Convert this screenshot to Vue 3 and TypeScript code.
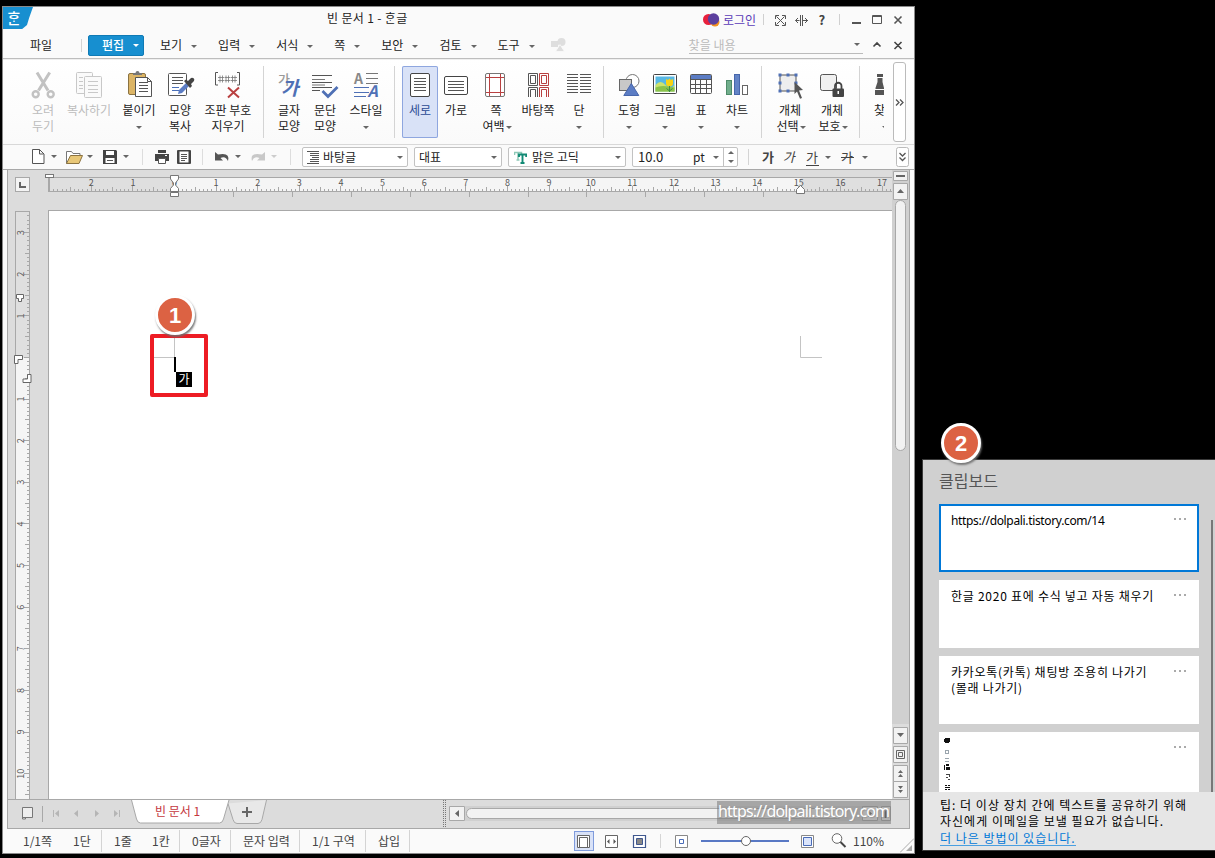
<script setup lang="ts">
interface Tool { lines: string[]; icon: string; w: number; drop?: 'below' | 'side'; off?: boolean; on?: boolean }
interface Group { left: number; right: number; tools: Tool[] }

const K = '#555'
const hlines = (x1: number, x2: number, ys: number[], c = K): string =>
  `<path d="${ys.map(y => `M${x1} ${y}H${x2}`).join('')}" stroke="${c}" fill="none"/>`

const icons: Record<string, string> = {
  cut: `<g fill="none" stroke="#c2c2c2"><path d="M10 2.500L21 20.500M22.700 2.500L11.500 20.500" stroke-width="3"/><circle cx="8.700" cy="24.300" r="3" stroke-width="2.400"/><circle cx="23.700" cy="24.300" r="3" stroke-width="2.400"/></g>`,
  copy: `<g fill="#fafafa" stroke="#c8c8c8"><rect x="3.500" y="2.500" width="16" height="21" rx="1"/><rect x="11.500" y="6.500" width="17" height="21" rx="1"/></g>` + hlines(6, 10, [7.5, 11.5, 15.5, 18.5], '#c8c8c8') + hlines(15, 25, [11.5, 15.5, 19.5, 22.5], '#c8c8c8'),
  paste: `<rect x="5.500" y="3.500" width="17" height="21" rx="1.500" fill="#dcb566" stroke="#8b7342"/><path d="M10 5V3h2.500a2 2 0 0 1 4 0H19v2z" fill="#777"/><path d="M12.500 7.500h12l4 4v15h-16z" fill="#fff" stroke="#555"/><path d="M24.500 7.500v4h4" fill="none" stroke="#555"/>` + hlines(16, 25, [12.5, 15.5, 18.5, 21.5]),
  shapecopy: `<rect x="4.500" y="3.500" width="18" height="22" rx="1" fill="#fff" stroke="#555"/>` + hlines(8, 19, [7.5, 10.5, 13.5]) + hlines(8, 15, [17.500, 20.500], '#4a6fb8') + `<path d="M14 24l1-4 7-7 3 3-7 7z" fill="#5b7cc4"/><path d="M20 11l2-1.500 2 1.500 3-3a2.200 2.200 0 0 1 3 3l-3 3 1 2-2 2z" fill="#444"/>`,
  clear: `<path d="M6 2.500H3.500V15H6M25 2.500h2.500V15H25" fill="none" stroke="#555"/><path d="M8 5.500v7M10.500 5.500v7M14 5.500v7M16.500 5.500v7M20.500 5.500v7M23 5.500v7M6 7.500h6M12.500 7.500h6M19 7.500h6M6 10.500h6M12.500 10.500h6M19 10.500h6" stroke="#777" stroke-width=".8"/><path d="M16 17.500l11 10M27 17.500l-11 10" stroke="#b94040" stroke-width="2"/>`,
  char: `<text x="5" y="13.500" font-size="13" font-weight="500" fill="#999">가</text><text x="8" y="24.500" font-size="19" font-weight="700" font-style="italic" fill="#4f70b5">가</text>`,
  para: hlines(3, 23, [5.5, 12.5, 17.5]) + hlines(3, 16, [9.5, 15], '#777') + hlines(3, 11, [20.5]) + `<path d="M13.500 21l5.500 5.500L28.500 17" fill="none" stroke="#4f70b5" stroke-width="2.800"/>`,
  style: `<text x="4" y="14" font-size="14" font-weight="700" fill="#888">A</text><text x="17.500" y="27" font-size="16" font-weight="700" font-style="italic" fill="#4f70b5">A</text>` + hlines(16, 28, [3.5, 8.5, 13.5], '#777') + hlines(4, 19, [17.5, 22.5], '#4f70b5') + hlines(4, 16, [26.5], '#4f70b5'),
  portrait: `<rect x="6.500" y="3.500" width="19" height="23" rx="1.500" fill="#fff" stroke="#444"/>` + hlines(10, 22, [8.5, 11.5, 14.5, 17.5, 20.5]),
  landscape: `<rect x="4.500" y="6.500" width="23" height="18" rx="1.500" fill="#fff" stroke="#444"/>` + hlines(8, 24, [11.5, 14.5, 17.5, 20.5]),
  margin: `<rect x="5.500" y="3.500" width="19" height="23" rx="1.500" fill="#fff" stroke="#777"/><path d="M9.500 4v22M20.500 4v22M6 7.500h18M6 22.500h18" stroke="#b94040"/>`,
  master: `<g fill="none" stroke="#555"><path d="M6.500 3.500h9v12h-9zM8.500 5.500h5v8h-5zM6.500 27V17.500h9V27M8.500 27v-7.500h5V27"/><path stroke="#b94040" d="M17.500 3.500h9v12h-9zM19.500 5.500h5v8h-5zM17.500 27V17.500h9V27M19.500 27v-7.500h5V27"/></g>`,
  columns: hlines(4, 15, [4.5, 7.5, 10.5, 13.5, 16.5, 19.5, 22.5]) + hlines(17, 28, [4.5, 7.5, 10.5, 13.5, 16.5, 19.5, 22.5]),
  shapes: `<circle cx="19.500" cy="11" r="6.500" fill="#fff" stroke="#777"/><rect x="6.500" y="9.500" width="12" height="11" fill="#c8c8c8" stroke="#666"/><path d="M18.300 13.500l7.500 12h-15z" fill="#5b7cc4" stroke="#4766ab"/>`,
  picture: `<rect x="4.500" y="4.500" width="23" height="19" rx="1" fill="#fff" stroke="#444"/><path d="M6.500 6.500h19v15h-19z" fill="#58b8e4"/><path d="M6.500 15q5-6 10 0t9 0v6.500h-19z" fill="#cce36c"/><path d="M6.500 17.500q6-3 19 0v4h-19z" fill="#8bc34a"/><path d="M17 9l2 1 1.500-1.500L22 10l2-1v4.500a3.500 3 0 0 1-7 0z" fill="#f8d313"/><path d="M20.500 16v6M17.500 18.500l3 2.500 3-2.500" stroke="#3d9140" fill="none"/>`,
  table: `<rect x="5.500" y="4.500" width="21" height="19" rx="1" fill="#fff" stroke="#555"/><path d="M6 5h20v4H6z" fill="#5b7cc4"/><path d="M5.500 9.500h21M5.500 14.500h21M5.500 18.500h21M10.500 9v14M15.500 9v14M21.500 9v14" stroke="#555"/>`,
  chart: `<rect x="5.500" y="10.500" width="5" height="14" fill="#70ad8b" stroke="#4e8b69"/><rect x="13.500" y="4.500" width="5" height="20" fill="#6384c6" stroke="#4766ab"/><rect x="21.500" y="15.500" width="5" height="9" fill="#fff" stroke="#666"/>`,
  select: `<rect x="6" y="5" width="16" height="16" fill="#eee" stroke="#555"/><path d="M4.500 3.500h3v3h-3zM12.500 3.500h3v3h-3zM20.500 3.500h3v3h-3zM4.500 11.500h3v3h-3zM20.500 11.500h3v3h-3zM4.500 19.500h3v3h-3zM12.500 19.500h3v3h-3z" fill="#4f70b5"/><path d="M20.500 12l8.500 8-4 .5 3 7.500-2 .8-3-7.300-2.500 2.500z" fill="#555"/>`,
  protect: `<rect x="4.500" y="4.500" width="16" height="16" rx="2" fill="#f0f0f0" stroke="#555"/><path d="M19 19v-3a3.200 3.200 0 0 1 6.500 0v3" fill="none" stroke="#444" stroke-width="1.800"/><rect x="16.500" y="18.500" width="11.500" height="8.500" rx="1" fill="#444"/><path d="M21.500 21h1.500v3h-1.500z" fill="#fff"/>`,
  find: `<path d="M8 4h6v3H8zM8.500 8h5v4l1.500 6v1H6.500v-1l2-6zM6 20h9v5H6zM18 4h6v3h-6zM18.500 8h5v4l2 6v1H17v-1l1.500-6zM17 20h9v5h-9z" fill="#555"/>`,
}

const groups: Group[] = [
  { left: 22, right: 6, tools: [
    { lines: ['오려', '두기'], icon: 'cut', w: 36, off: true },
    { lines: ['복사하기'], icon: 'copy', w: 56, off: true },
    { lines: ['붙이기'], icon: 'paste', w: 44, drop: 'below' },
    { lines: ['모양', '복사'], icon: 'shapecopy', w: 38 },
    { lines: ['조판 부호', '지우기'], icon: 'clear', w: 58 },
  ] },
  { left: 7, right: 5, tools: [
    { lines: ['글자', '모양'], icon: 'char', w: 36 },
    { lines: ['문단', '모양'], icon: 'para', w: 36 },
    { lines: ['스타일'], icon: 'style', w: 46, drop: 'below' },
  ] },
  { left: 7, right: 3, tools: [
    { lines: ['세로'], icon: 'portrait', w: 36, on: true },
    { lines: ['가로'], icon: 'landscape', w: 36 },
    { lines: ['쪽', '여백'], icon: 'margin', w: 44, drop: 'side' },
    { lines: ['바탕쪽'], icon: 'master', w: 40 },
    { lines: ['단'], icon: 'columns', w: 42, drop: 'below' },
  ] },
  { left: 7, right: 6, tools: [
    { lines: ['도형'], icon: 'shapes', w: 36, drop: 'below' },
    { lines: ['그림'], icon: 'picture', w: 36, drop: 'below' },
    { lines: ['표'], icon: 'table', w: 36, drop: 'below' },
    { lines: ['차트'], icon: 'chart', w: 36, drop: 'below' },
  ] },
  { left: 7, right: 6, tools: [
    { lines: ['개체', '선택'], icon: 'select', w: 42, drop: 'side' },
    { lines: ['개체', '보호'], icon: 'protect', w: 42, drop: 'side' },
  ] },
  { left: 4, right: 0, tools: [{ lines: ['찾기'], icon: 'find', w: 42, drop: 'below' }] },
]

const menus = ['보기', '입력', '서식', '쪽', '보안', '검토', '도구']

const CM = 41.62
interface Tick { p: number; len: number }
const ticks = (zero: number, from: number, to: number): Tick[] => {
  const out: Tick[] = []
  for (let i = Math.ceil((from - zero) / CM * 10); zero + i * CM / 10 < to; i++) {
    out.push({ p: Math.round(zero + i * CM / 10) + 0.5, len: i % 10 === 0 ? 5 : i % 5 === 0 ? 4 : 2 })
  }
  return out
}
const hPath = ticks(125, 4, 843).map(t => `M${t.p} ${14 - t.len}V14`).join('')
const vPath = ticks(146, 3, 587).map(t => `M${14 - t.len} ${t.p}H14`).join('')
const hNums = Array.from({ length: 20 }, (_, i) => i - 2).map(n => ({ n: Math.abs(n), x: 125.5 + n * CM }))
const vNums = Array.from({ length: 14 }, (_, i) => i - 3).filter(n => n !== 0).map(n => ({ n: Math.abs(n), y: 146.5 + n * CM }))
const tabStops = Array.from({ length: 10 }, (_, i) => Math.round(184 + i * 58.9) + 0.5)

const clips: string[][] = [
  ['https://dolpali.tistory.com/14'],
  ['한글 2020 표에 수식 넣고 자동 채우기'],
  ['카카오톡(카톡) 채팅방 조용히 나가기', '(몰래 나가기)'],
]
</script>

<template>
  <div class="desktop">
    <div class="window">
      <header class="title">
        <div class="logo">ᄒᆞᆫ</div>
        <div class="caption">빈 문서 1 - ᄒᆞᆫ글</div>
        <div class="tright">
          <svg width="17" height="14" viewBox="0 0 17 14"><circle cx="5.500" cy="6.500" r="5.500" fill="#e8203c" /><circle cx="12" cy="9" r="4.500" fill="#f5921e" /><circle cx="10.500" cy="6" r="5.700" fill="#5b3f9e" /></svg>
          <span class="login">로그인</span>
          <svg class="tools" width="150" height="16" viewBox="760 12 150 16" fill="none" stroke="#555">
            <path d="M763.500 14v11M839.500 14v11" stroke="#d0d0d0" />
            <path d="M775.500 19v-3.500h3.500M782 15.500h3.500V19M785.500 22v3.500H782M779 25.500h-3.500V22M776.500 16.500l8 8M784.500 16.500l-8 8" />
            <path d="M800.500 15v11M802.500 15v11M795.500 20.500h4M803 20.500h5M798 18l-2.500 2.500L798 23M805 18l2.500 2.500L805 23" />
            <path d="M852 23h9" stroke-width="2" />
            <path d="M872.500 15.500h9v8h-9zM872 16.500h10" />
            <path d="M894.500 16.500l7 7M901.500 16.500l-7 7" stroke-width="1.600" />
            <text x="818.500" y="25" stroke="none" fill="#444" font-size="13" font-weight="700">?</text>
          </svg>
        </div>
      </header>

      <nav class="menu">
        <span class="file">파일</span>
        <i class="vline" />
        <span class="edit">편집<b class="arr white" /></span>
        <span v-for="m in menus" :key="m" class="mi">{{ m }}<b class="arr" /></span>
        <svg class="mshape" width="16" height="14" viewBox="0 0 16 14" fill="#dedede"><rect y="3" width="7" height="6" /><circle cx="10.500" cy="4" r="4" /><path d="M9 6.500l4.500 7H4.500z" stroke="#fafafa" stroke-width=".8" /></svg>
        <div class="search"><span>찾을 내용</span><b class="arr" /></div>
        <svg width="32" height="12" viewBox="0 0 32 12" fill="none" stroke="#444" stroke-width="1.600"><path d="M1.500 7.500L5 4l3.500 3.500M22.500 3l7 7M29.500 3l-7 7" /></svg>
      </nav>

      <section class="ribbon">
        <div class="groups">
          <div v-for="(g, gi) in groups" :key="gi" class="group" :style="{ paddingLeft: g.left + 'px', paddingRight: g.right + 'px' }">
            <div v-for="t in g.tools" :key="t.icon" class="tool" :class="{ off: t.off, on: t.on }" :style="{ width: t.w + 'px' }">
              <svg width="32" height="30" viewBox="0 0 32 30" v-html="icons[t.icon]" />
              <div v-for="(l, li) in t.lines" :key="l" class="tl">{{ l }}<b v-if="t.drop === 'side' && li === 1" class="arr" /></div>
              <b v-if="t.drop === 'below'" class="arr under" />
            </div>
          </div>
        </div>
        <div class="more"><svg width="9" height="7" viewBox="0 0 9 7" fill="none" stroke="#555" stroke-width="1.300"><path d="M1 .5l3 3-3 3M5 .5l3 3-3 3" /></svg></div>
      </section>

      <section class="format">
        <svg class="quick" width="290" height="20" viewBox="3 147 290 20" fill="none" stroke="#555">
          <path d="M32.500 149.500h7l4.500 4.500v9.500h-11.500zM39.500 149.500v4.500h4" fill="#fff" />
          <path d="M66.500 163.500v-12h5l1.500 2h7v4" fill="#fff" stroke="#777" /><path d="M66.500 163.500l4-8h12l-3.500 8z" fill="#e8c777" stroke="#8b7342" />
          <path d="M103 150h13l1 1v13h-14z" fill="#444" stroke="none" /><path d="M106 151h8v4h-8zM105.500 158h9v5h-9z" fill="#fff" stroke="none" /><path d="M107 160.500h6" />
          <path d="M158 150h8v3h-8zM155 154h14v7h-14z" fill="#444" stroke="none" /><path d="M158.500 158.500h7v5h-7z" fill="#fff" /><path d="M165 155.500h2" stroke="#fff" />
          <rect x="177" y="150" width="14" height="14" rx="1" fill="#444" stroke="none" /><rect x="179.500" y="151.500" width="9" height="11" fill="#fff" stroke="none" /><path d="M181 154.500h6M181 156.500h6M181 158.500h6M181 160.500h4" />
          <path d="M215 152v8.500h8l-2.500-2.500q5-2.500 7.500 3 2.500-9-10-6.500z" fill="#555" stroke="none" />
          <path d="M265 152v8.500h-8l2.500-2.500q-5-2.500-7.500 3-2.500-9 10-6.500z" fill="#c8c8c8" stroke="none" />
          <path d="M51 155h6l-3 3zM87 155h6l-3 3zM123 155h6l-3 3zM235 155h6l-3 3z" fill="#666" stroke="none" /><path d="M271 155h6l-3 3z" fill="#ccc" stroke="none" />
          <path d="M142.500 149v16M202.500 149v16M290.500 149v16" stroke="#ddd" />
        </svg>
        <div class="combo c1"><svg width="12" height="13" viewBox="0 0 12 13" stroke="#555"><path d="M0 .5h12M3 2.500h9M3 4.500h9M5 6.500h7M3 8.500h9M3 10.500h9M0 12.500h12" /></svg><span>바탕글</span><b class="arr" /></div>
        <div class="combo c2"><span>대표</span><b class="arr" /></div>
        <div class="combo c3"><svg width="13" height="13" viewBox="0 0 13 13" fill="none"><path d="M.5 4V1.500h7V4M4 1.500v7M2.500 9h3" stroke="#8fc9b8" stroke-width="1.500" /><path d="M5 6V3.500h7.200V6M8.500 3.500v8M6.500 12h4" stroke="#128a75" stroke-width="1.900" /></svg><span>맑은 고딕</span><b class="arr" /></div>
        <div class="combo c4"><span class="size">10.0</span><span>pt</span><b class="arr" /><div class="spin"><b class="arr up" /><b class="arr" /></div></div>
        <i class="vline fl" />
        <div class="fmt"><b>가</b></div>
        <div class="fmt it">가</div>
        <div class="fmt un">가</div><b class="arr fa" />
        <div class="fmt st">가</div><b class="arr" />
        <svg class="fmore" width="13" height="20" viewBox="0 0 13 20" fill="none" stroke="#555"><rect x=".5" y=".5" width="12" height="19" rx="2" fill="#fff" stroke="#bbb" /><path d="M3.500 6l3 3 3-3M3.500 10.500l3 3 3-3" stroke-width="1.300" /></svg>
      </section>

      <main class="work">
        <div class="leftcol">
          <svg class="corner" width="15" height="15" viewBox="0 0 15 15"><rect x=".5" y=".5" width="14" height="14" fill="#f4f4f4" stroke="#a8a8a8" /><path d="M5 5v5h6" fill="none" stroke="#666" stroke-width="2" /></svg>
          <svg class="vruler" width="18" height="588" viewBox="-1 0 18 588">
            <rect x=".5" y=".5" width="14" height="590" fill="#dfdfdf" stroke="#a8a8a8" /><rect x="1" y="147" width="13" height="441" fill="#f5f5f5" />
            <path :d="vPath" stroke="#a8a8a8" />
            <text v-for="(v, i) in vNums" :key="i" :transform="`translate(8.500 ${v.y}) rotate(-90)`" text-anchor="middle">{{ v.n }}</text>
            <g fill="#fff" stroke="#666"><path d="M1.500 83.500h7v4h-2v3h-3v-3h-2z" /><path d="M-.5 144.500h8v4h-4.500v4h-3.500z" /><path d="M12.500 163.500h3.500v8h-8v-3.500h4.500z" /></g>
          </svg>
        </div>
        <div class="canvas">
          <svg class="hruler" width="848" height="40" viewBox="-4 -7 848 40">
            <path d="M0 .500H844V14.500H0z" fill="#dfdfdf" /><path d="M125.500 1h626v13h-626z" fill="#f5f5f5" />
            <path d="M0 .500H844M0 14.500H844" stroke="#a8a8a8" /><path d="M0 0v15" stroke="#a8a8a8" stroke-width="2" />
            <path :d="hPath" stroke="#a8a8a8" />
            <path v-for="x in tabStops" :key="x" :d="`M${x} 15v5`" stroke="#a8a8a8" />
            <text v-for="(h, i) in hNums" :key="i" :x="h.x" y="9" text-anchor="middle">{{ h.n }}</text>
            <g fill="#fff" stroke="#777"><rect x="-3.500" y="-2.500" width="8" height="3" /><path d="M121.500-1.500h8V2L126.500 6v2l3 3.500v3h-8v-3l3-3.500V6l-3-4zM121.500 15.500h8v4h-8z" /><path d="M121.500 14.500h8" /><path d="M747.500 16.500v-4l4-4 4 4v4z" /></g>
          </svg>
          <div class="page">
            <svg width="843" height="588" viewBox="49 211 843 588">
              <path d="M174.500 338v19.500H154M800.500 336v21.500H822" fill="none" stroke="#c4c4c4" />
              <rect x="152" y="336" width="54" height="59" fill="none" stroke="#ed1c24" stroke-width="4" stroke-linejoin="round" />
              <path d="M175 357v15" stroke="#000" stroke-width="2" /><rect x="176" y="372" width="16" height="15" fill="#000" />
              <text x="184" y="384" text-anchor="middle">가</text>
            </svg>
          </div>
        </div>
        <div class="vscroll">
          <svg width="17" height="629" viewBox="892 170 17 629" fill="#f2f2f2" stroke="#a8a8a8">
            <path d="M892 170h17v629h-17z" fill="#d0d0d0" stroke="none" /><path d="M892 724h17v75h-17z" fill="#dcdcdc" stroke="none" />
            <path d="M893.500 171.500h14v9h-14zM893.500 183.500h14v16h-14zM893.500 727.500h14v16h-14zM893.500 746.500h14v16h-14zM893.500 765.500h14v16h-14zM893.500 781.500h14v16h-14z" />
            <rect x="895.500" y="200.500" width="10" height="250" rx="5" />
            <path d="M896 176h9" stroke="#666" stroke-width="2" />
            <path d="M897 193h7l-3.500-4zM897 733h7l-3.500 4zM898 773h5l-2.500-3zM898 777h5l-2.500-3zM898 786h5l-2.500 3zM898 790h5l-2.500 3z" fill="#666" stroke="none" />
            <path d="M896.500 750.500h8v8h-8zM898.500 752.500h4v4h-4z" stroke="#666" />
          </svg>
        </div>
      </main>

      <section class="tabs">
        <svg width="901" height="28" viewBox="8 800 901 28" fill="none" stroke="#a8a8a8">
          <path d="M22.500 807.500h10v10h-7v1.500h-3zM23 817.500h4" stroke="#777" fill="#eee" />
          <path d="M42.500 806v16" />
          <g fill="#b5b5b5" stroke="none"><path d="M53 810h1v7h-1zM59 810v7l-4-3.500zM78 810v7l-4-3.500zM95 810v7l4-3.500zM114 810v7l4-3.500zM119 810h1v7h-1z" /></g>
          <path d="M228 803.500l5 16q1 4 4 4h21q3 0 4-4l4.500-19.500" fill="#e8e8e8" />
          <path d="M131.500 800l5 19q1 4 4 4h79q3 0 4-4l5.500-19" fill="#fff" />
          <path d="M242 812h10M247 807v10" stroke="#666" stroke-width="2" />
          <path d="M443.500 800v28M445.500 800v28" stroke="#777" stroke-dasharray="1 1" />
          <path d="M465 806h398v15H465z" fill="#d0d0d0" stroke="none" />
          <path d="M449.500 806.500h15v14h-15zM862.500 806.500h15v14h-15zM881.500 806.500h9v14h-9z" fill="#f2f2f2" />
          <path d="M459 810v7l-4-3.500zM868 810v7l4-3.500z" fill="#666" stroke="none" />
          <path d="M885.500 809v9" stroke="#555" stroke-width="2" />
          <rect x="466.500" y="808.500" width="376" height="10" rx="5" fill="#f2f2f2" />
          <text x="155" y="816" class="doc" fill="#c4383e" stroke="none">빈 문서 1</text>
        </svg>
        <div class="mark">https://dolpali.tistory.com</div>
      </section>

      <footer class="status">
        <span class="s1">1/1쪽</span><span class="s2">1단</span><span class="s3">1줄</span><span class="s4">1칸</span><span class="s5">0글자</span><span class="s6">문자 입력</span><span class="s7">1/1 구역</span><span class="s8">삽입</span>
        <svg width="276" height="23" viewBox="571 830 276 23" fill="none" stroke="#666">
          <rect x="574.500" y="831.500" width="19" height="19" fill="#d9e2f7" stroke="#7f9bdc" />
          <path d="M577.500 835.500h12v12h-12zM579.500 847v-9.500h8V847" fill="#fff" />
          <path d="M605.500 835.500h12v12h-12z" fill="#fff" /><path d="M607 841.500l2.500-2.500v5zM616 841.500l-2.500-2.500v5z" fill="#555" stroke="none" />
          <path d="M633.500 835.500h12v12h-12z" fill="#fff" stroke="#40588f" stroke-width="1.200" /><path d="M636.500 838.500h6v6h-6z" fill="#888" stroke="#40588f" />
          <path d="M660.500 834v14" stroke="#d5d5d5" />
          <path d="M675.500 835.500h12v12h-12z" fill="#fff" stroke="#888" /><path d="M679.500 839.500h4v4h-4z" stroke="#4a6cb8" />
          <path d="M701 841h88" stroke="#5878c4" stroke-width="2" /><circle cx="746" cy="841" r="4.500" fill="#fff" />
          <path d="M801.500 835.500h12v12h-12z" fill="#fff" stroke="#888" /><path d="M803.500 837.500h8v8h-8z" fill="#dbe5fb" stroke="#4a6cb8" />
          <circle cx="837" cy="838.500" r="4.800" fill="#fff" /><path d="M840.500 842l5 5" stroke="#444" stroke-width="2" />
        </svg>
        <span class="zoom">110%</span>
        <svg class="grip" width="14" height="15" viewBox="0 0 14 15"><path d="M0 14.500L14 .5" stroke="#aaa" /><path d="M12 7v6H6z" fill="#aaa" /></svg>
      </footer>
    </div>

    <div class="badge one">1</div>

    <aside class="clipboard">
      <h2>클립보드</h2>
      <div class="list">
        <div v-for="(c, i) in clips" :key="i" class="card" :class="{ sel: i === 0 }">
          <div><p v-for="l in c" :key="l" :class="{ latin: i === 0 }">{{ l }}</p></div><span class="dots"><i /><i /><i /></span>
        </div>
        <div class="card pic">
          <svg width="8" height="56" viewBox="0 0 8 56" fill="#111"><path d="M1 2h5v1H1zM0 3h6v3H0zM1 6h4v1H1zM0 29h1v5H0zM2 28h3v2H2zM2 31h4v3H2zM1 49h2v1H1zM4 49h2v1H4zM1 51h5v1H1zM1 53h2v1H1zM4 53h2v1H4z" /><path d="M1 14h4v1H1zM1 17h4v1H1zM4 14h1v4H4zM1 22h4v1H1zM1 25h4v1H1zM1 14h1v4H1z" fill="#9aa5ad" /><path d="M2 38h3v1H2zM5 38h1v3H5zM2 41h2v1H2zM4 43h2v1H4z" fill="#444" /></svg>
          <span class="dots"><i /><i /><i /></span>
        </div>
      </div>
      <div class="bar" />
      <div class="tip"><p>팁: 더 이상 장치 간에 텍스트를 공유하기 위해</p><p>자신에게 이메일을 보낼 필요가 없습니다.</p><a>더 나은 방법이 있습니다.</a></div>
    </aside>
    <div class="badge two">2</div>
  </div>
</template>

<style>
html, body { margin: 0; background: #000; overflow: hidden; }
</style>

<style scoped>
.desktop { position: relative; width: 1215px; height: 858px; background: #000; overflow: hidden; font: 12px/16px "Noto Sans CJK KR", "Noto Sans", sans-serif; color: #222; }
.desktop * { box-sizing: border-box; }
svg { display: block; flex: none; }
span, div { white-space: nowrap; }
.window { position: absolute; left: 2px; top: 6px; width: 913px; height: 848px; border: 1px solid #8a8a8a; background: #fafafa; display: flex; flex-direction: column; }
.arr { display: inline-block; flex: none; width: 0; height: 0; border: 3px solid transparent; border-top-color: #666; border-bottom: 0; }
.arr.white { border-top-color: #fff; }
.arr.up { border-top: 0; border-bottom: 3px solid #666; }
.vline { width: 1px; background: #d4d4d4; flex: none; }

.title { height: 26px; flex: none; display: flex; }
.logo { flex: none; width: 30px; height: 22px; background: #178fd0; clip-path: polygon(0 0, 100% 0, 87% 50%, 80% 82%, 64% 100%, 0 100%); color: #fff; font-size: 15px; font-weight: 500; line-height: 21px; padding-left: 4px; }
.caption { margin-left: 294px; width: 340px; line-height: 22px; letter-spacing: .35px; }
.tright { display: flex; align-items: center; margin-left: 36px; height: 26px; }
.login { color: #5a3cb8; margin-left: 3px; width: 37px; }

.menu { height: 25px; flex: none; display: flex; align-items: center; padding-bottom: 1px; box-shadow: 0 1px #bdbdbd; position: relative; }
.file { margin-left: 27px; width: 51px; }
.menu .vline { height: 13px; }
.edit { display: flex; align-items: center; margin-left: 6px; margin-right: 16px; width: 56px; height: 21px; background: #178fd0; border: 1px solid #0f7ab5; border-radius: 2px; color: #fff; font-weight: 500; padding-left: 13px; }
.edit .arr { margin-left: 9px; }
.mi { display: flex; align-items: center; margin-right: 21px; }
.mi .arr { margin-left: 9px; margin-top: 3px; }
.mshape { margin-left: -5px; }
.search { margin-left: 122px; width: 174px; height: 17px; border-bottom: 1px solid #bbb; color: #bbb; display: flex; align-items: center; justify-content: space-between; padding-right: 3px; margin-right: 9px; }

.ribbon { height: 87px; flex: none; display: flex; border-bottom: 1px solid #d8d8d8; background: linear-gradient(#fff, #fafafa); box-shadow: inset 0 2px #efefef; padding-top: 1px; }
.groups { width: 881px; display: flex; overflow: hidden; padding-top: 7px; }
.group { display: flex; flex: none; height: 72px; }
.group + .group { border-left: 1px solid #d4d4d4; }
.tool { flex: none; height: 72px; display: flex; flex-direction: column; align-items: center; padding-top: 4px; }
.tool > svg { margin-bottom: 2px; overflow: visible; }
.tool.on { background: #d9e2f7; box-shadow: inset 0 0 0 1px #8ea6df; border-radius: 2px; color: #2b4a94; }
.tool.off { color: #bcbcbc; }
.tl { height: 16px; line-height: 16px; display: flex; align-items: center; }
.tl .arr { margin: 3px -2px 0 1px; }
.under { margin-top: 8px; }
.more { margin: 3px 0 0 9px; width: 13px; height: 80px; border: 1px solid #bbb; border-radius: 3px; background: #fff; display: flex; align-items: center; justify-content: center; }

.format { height: 25px; flex: none; display: flex; align-items: center; border-bottom: 1px solid #a8a8a8; background: #fafafa; }
.combo { height: 20px; border: 1px solid #c2c2c2; border-radius: 2px; background: #fff; display: flex; align-items: center; }
.combo > .arr { margin-left: auto; margin-right: 4px; }
.c1 { margin-left: 9px; width: 106px; padding-left: 4px; } .c1 span { margin-left: 4px; }
.c2 { margin-left: 6px; width: 88px; padding-left: 4px; }
.c3 { margin-left: 6px; width: 118px; padding-left: 5px; } .c3 span { margin-left: 5px; }
.c4 { margin-left: 6px; width: 106px; padding-left: 5px; }
.size { width: 55px; font-size: 13px; }
.spin { width: 14px; height: 18px; border-left: 1px solid #c2c2c2; display: flex; flex-direction: column; justify-content: space-around; align-items: center; }
.fl { height: 16px; margin: 0 13px 0 10px; }
.fmt { width: 13px; margin-right: 9px; color: #444; font-size: 13px; line-height: 15px; padding-bottom: 1px; }
.fmt b { font-weight: 700; }
.it { transform: skewX(-14deg); }
.un { border-bottom: 1px solid #444; margin-right: 6px; height: 17px; }
.fa { margin-right: 10px; }
.st { margin-right: 8px; background: linear-gradient(#444, #444) 0 8px / 100% 1px no-repeat; }
.fmore { margin-left: auto; margin-right: 5px; }

.work { height: 629px; flex: none; margin: 0 4px; border-left: 1px solid #a8a8a8; border-right: 1px solid #a8a8a8; background: #dcdcdc; display: flex; }
.work text { font-size: 9px; fill: #555; }
.leftcol { width: 37px; padding-left: 6px; }
.corner { margin: 7px 0 19px 1px; }
.canvas { width: 847px; overflow: hidden; }
.page { margin-left: 3px; border-left: 1px solid #a8a8a8; border-top: 1px solid #a8a8a8; background: #fff; height: 589px; }
.work .page text { font-size: 12px; fill: #fff; }
.vscroll { width: 17px; }

.tabs { height: 30px; flex: none; margin: 0 4px; border: 1px solid #a8a8a8; background: #dcdcdc; position: relative; }
.doc { font-size: 12px; }
.mark { position: absolute; left: 709px; top: 1px; width: 174px; height: 23px; background: rgba(112, 112, 112, .5); color: #fff; font: 16px/20px "Noto Sans", sans-serif; letter-spacing: -.84px; padding-left: 1px; text-shadow: 1px 1px 1px #999; }

.status { flex: 1; display: flex; align-items: center; color: #444; height: 23px; padding-left: 8px; position: relative; }
.status > span { height: 22px; line-height: 22px; padding-left: 12px; }
.s1 { width: 50px; } .s2 { width: 41px; } .s2, .s4, .s5, .s6, .s7, .s8 { border-right: 1px solid #d4d4d4; }
.status .s3 { width: 38px; } .s4 { width: 40px; } .s5 { width: 51px; } .s6 { width: 69px; } .s7 { width: 66px; } .s8 { width: 44px; margin-right: 161px; }
.status .zoom { padding-left: 6px; font-size: 12px; }
.grip { position: absolute; right: 0; bottom: 0; }

.badge { position: absolute; width: 40px; height: 40px; border-radius: 50%; border: 3px solid #fff; background: #dc6243; color: #fff; font: 700 22px/35px "Liberation Sans", sans-serif; text-align: center; box-shadow: 1px 2px 2px rgba(110, 110, 110, .9); }
.one { left: 155px; top: 295px; }
.two { left: 941px; top: 423px; }

.clipboard { position: absolute; left: 922px; top: 459px; width: 293px; height: 392px; border: 1px solid #3a3a3a; border-right: 0; background: #d0d0d0; color: #000; }
.clipboard h2 { margin: 0; padding: 9px 0 0 16px; font-weight: 400; font-size: 16px; line-height: 22px; height: 44px; color: #555; }
.list { height: 288px; overflow: hidden; padding-left: 16px; display: flex; flex-direction: column; gap: 8px; }
.card { width: 260px; height: 68px; flex: none; background: #fff; padding: 8px 13px 0 12px; display: flex; justify-content: space-between; }
.card p { margin: 0; letter-spacing: .73px; }
.card p.latin { font-family: "Noto Sans"; letter-spacing: -.34px; padding-top: 1px; }
.card.sel { border: 2px solid #0078d7; padding: 6px 11px 0 10px; }
.dots { display: flex; gap: 3px; padding-top: 6px; }
.dots i { width: 2px; height: 2px; background: #aaa; }
.pic { padding: 4px 13px 0 5px; }
.pic .dots { padding-top: 10px; }
.bar { position: absolute; left: 288px; top: 60px; width: 2px; height: 272px; background: #777; }
.tip { height: 58px; background: #e6e6e6; padding: 5px 0 0 17px; line-height: 16px; letter-spacing: 1.01px; }
.tip p { margin: 0; }
.tip a { display: inline-block; height: 17px; padding-top: 1px; letter-spacing: .98px; color: #0078d7; border-bottom: 1px solid #4a9fe0; }
</style>
